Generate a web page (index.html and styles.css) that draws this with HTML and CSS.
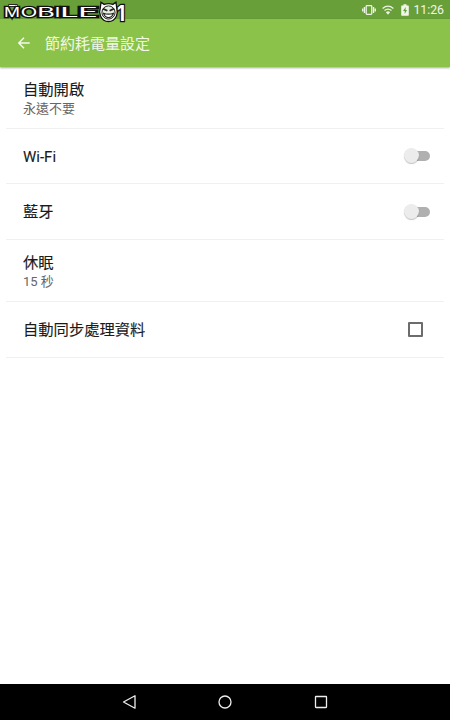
FILE: index.html
```
<!DOCTYPE html>
<html lang="zh-Hant">
<head>
  <meta charset="UTF-8">
  <meta name="viewport" content="width=device-width, initial-scale=1.0">
  <title>節約耗電量設定</title>
  <link rel="stylesheet" href="styles.css">
</head>
<body>

  <div class="status-bar">
    <svg class="vibrate" width="14" height="12" viewBox="0 0 14 12">
      <rect x="4.2" y="1.6" width="5.6" height="8.8" rx=".8"/>
      <path d="M2.4 3v6M11.6 3v6M.7 4.5v3M13.3 4.5v3"/>
    </svg>
    <svg class="wifi" width="12" height="10" viewBox="0 0 12 10">
      <path d="M.6 3.4Q6-1.1 11.4 3.4M2.5 5.6Q6 2.6 9.5 5.6"/>
      <path class="solid" d="M3.9 7.2Q6 5.5 8.1 7.2L6 9.8z"/>
    </svg>
    <svg class="battery" width="8" height="12" viewBox="0 0 8 12">
      <path d="M2.5.3h3v1.2h1.7q.6 0 .6.6v9q0 .6-.6.6H.8q-.6 0-.6-.6v-9q0-.6.6-.6h1.7z"/>
      <path class="bolt" d="M4.8 2.9L2 7h1.7v3L6.1 6H4.5z"/>
    </svg>
    <span class="clock">11:26</span>
  </div>

  <header>
    <svg class="back" width="12" height="12" viewBox="0 0 12 12">
      <path d="M11.7 6H1M6 .8L.8 6 6 11.2"/>
    </svg>
    <h1>節約耗電量設定</h1>
  </header>

  <!-- site watermark -->
  <svg class="watermark" width="128" height="25" viewBox="0 0 128 25">
    <path class="edge" d="M8.500 5.500h9"/>
    <path class="line" d="M9 5.500h8"/>
    <g class="word">
      <text x="4" y="17" textLength="16" lengthAdjust="spacingAndGlyphs">M</text>
      <text x="20.500" y="17" textLength="17" lengthAdjust="spacingAndGlyphs">O</text>
      <text x="37" y="17" textLength="18" lengthAdjust="spacingAndGlyphs">B</text>
      <text x="54.500" y="17" textLength="6" lengthAdjust="spacingAndGlyphs">I</text>
      <text x="60" y="17" textLength="19" lengthAdjust="spacingAndGlyphs">L</text>
      <text x="78" y="17" textLength="20" lengthAdjust="spacingAndGlyphs">E</text>
    </g>
    <path class="head" d="M101 2.200l3.200 2.200q4.300-1.600 8.600 0L116 2.200l.8 6.300q1.500 3.800-.3 7.400-2.600 5.600-8 5.600t-8-5.600q-1.800-3.600-.3-7.400z"/>
    <circle class="inner" cx="108.500" cy="12.500" r="6.600"/>
    <path class="eyes" d="M102.800 8.600l4.600 2.200M114.200 8.600l-4.600 2.200"/>
    <path class="mouth" d="M103.500 13.200q5 1.800 10 0-1.200 4.300-5 4.500-3.800-.2-5-4.500z"/>
    <text class="one" x="117" y="20.500" textLength="8" lengthAdjust="spacingAndGlyphs">1</text>
  </svg>

  <main>
    <div class="row tall">
      <div>
        <h2>自動開啟</h2>
        <p>永遠不要</p>
      </div>
    </div>
    <div class="row wifi-row">
      <h2 class="latin">Wi-Fi</h2>
      <span class="switch"></span>
    </div>
    <div class="row">
      <h2>藍牙</h2>
      <span class="switch"></span>
    </div>
    <div class="row tall">
      <div>
        <h2>休眠</h2>
        <p>15 秒</p>
      </div>
    </div>
    <div class="row">
      <h2>自動同步處理資料</h2>
      <span class="checkbox"></span>
    </div>
  </main>

  <nav>
    <svg width="16" height="16" viewBox="0 0 16 16"><path d="M14 1.800v12.400L2.500 8z"/></svg>
    <svg width="16" height="16" viewBox="0 0 16 16"><circle cx="8" cy="8" r="6"/></svg>
    <svg width="16" height="16" viewBox="0 0 16 16"><rect x="2.500" y="2.500" width="11" height="11" rx=".5"/></svg>
  </nav>

</body>
</html>
```

FILE: styles.css
```
* {
  box-sizing: border-box;
}

body {
  font-family: Roboto, "Noto Sans CJK TC", sans-serif;
  margin: 0;
  height: 720px;
  display: flex;
  flex-direction: column;
  background-color: #fff;
  overflow: hidden;
}

h1, h2, p {
  margin: 0;
}

svg {
  display: block;
  flex: none;
}

/* Status bar */
.status-bar {
  height: 19px;
  flex: none;
  display: flex;
  align-items: center;
  justify-content: flex-end;
  padding-right: 6px;
  background-color: #689f38;
  color: #f1f6ec;
}

.vibrate, .wifi {
  fill: none;
  stroke: #edf4e6;
  stroke-width: 1.3;
}

.vibrate {
  margin-right: 6px;
}

.wifi {
  margin-right: 7px;
}

.wifi .solid {
  fill: #edf4e6;
  stroke: none;
}

.battery {
  fill: #f1f6ec;
  margin-right: 4px;
}

.battery .bolt {
  fill: #689f38;
}

.clock {
  font-size: 12.3px;
  line-height: 18px;
  padding-top: 1px;
}

/* Toolbar */
header {
  height: 48px;
  flex: none;
  display: flex;
  align-items: center;
  padding-left: 18px;
  background-color: #8bc34a;
  box-shadow: 0 1px 2px rgba(0, 0, 0, 0.35);
}

.back {
  fill: none;
  stroke: #f4f9ed;
  stroke-width: 1.4;
  margin-right: 15px;
}

h1 {
  font-size: 15px;
  line-height: 22px;
  padding-top: 1px;
  font-weight: 400;
  color: #f1f8e9;
}

/* Watermark */
.watermark {
  position: absolute;
  left: 0;
  top: 0;
  fill: none;
}

.word, .one {
  font-family: Inter, sans-serif;
  fill: #fff;
  stroke: #111;
  stroke-width: 2.6;
  stroke-linejoin: miter;
  paint-order: stroke;
}

.word {
  font-weight: 400;
  font-size: 12.5px;
}

.one {
  font-weight: 700;
  font-size: 21px;
}

.edge {
  stroke: #111;
  stroke-width: 3;
}

.line {
  stroke: #fff;
  stroke-width: 1.2;
}

.head {
  fill: #fff;
  stroke: #111;
  stroke-width: 1.3;
}

.inner {
  fill: #e5eedc;
  stroke: #222;
  stroke-width: 1;
}

.eyes {
  stroke: #222;
  stroke-width: 1.8;
}

.mouth {
  fill: #fff;
  stroke: #222;
  stroke-width: 1.2;
}

/* Settings list */
main {
  flex: 1;
  padding: 0 6px;
}

.row {
  height: 56px;
  display: flex;
  align-items: center;
  justify-content: space-between;
  padding: 0 14px 0 17px;
  border-bottom: 1px solid #f0f0f0;
}

.row.wifi-row {
  height: 55px;
}

.row.tall {
  height: 62px;
}

h2 {
  font-size: 15.3px;
  line-height: 20px;
  padding-top: 1px;
  font-weight: 400;
  color: #1a1a1a;
  -webkit-text-stroke: 0.12px #1a1a1a;
}

p {
  font-size: 13px;
  line-height: 17px;
  color: #666;
}

h2.latin {
  font-size: 15px;
}

.switch {
  position: relative;
  width: 24px;
  height: 10px;
  border-radius: 5px;
  background-color: #b0b0b0;
}

.switch::before {
  content: "";
  position: absolute;
  left: -2px;
  top: -3px;
  width: 15px;
  height: 15px;
  border-radius: 50%;
  background-color: #ececec;
  box-shadow: 0 1px 1px rgba(0, 0, 0, 0.25);
}

.checkbox {
  width: 15px;
  height: 15px;
  margin-right: 7px;
  border: 2px solid #6c6c6c;
  border-radius: 1px;
}

/* Navigation bar */
nav {
  height: 36px;
  flex: none;
  display: flex;
  align-items: center;
  justify-content: center;
  gap: 80px;
  background-color: #000;
}

nav svg {
  fill: none;
  stroke: #eee;
  stroke-width: 1.3;
  stroke-linejoin: round;
}
```
